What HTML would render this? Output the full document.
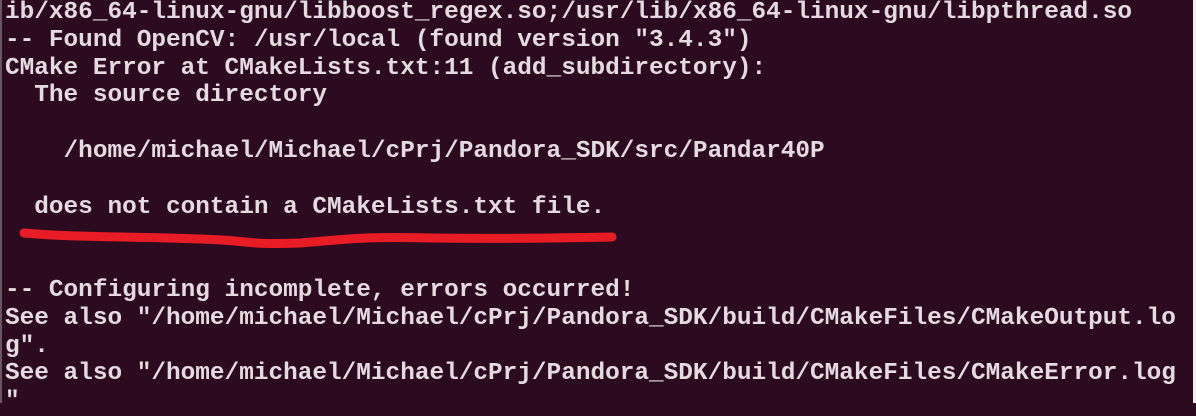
<!DOCTYPE html>
<html><head><meta charset="utf-8"><style>
html,body{margin:0;padding:0;}
body{width:1196px;height:403px;overflow:hidden;background:#2c0a20;position:relative;}
pre{position:absolute;left:5px;top:-1px;margin:0;font-family:"Liberation Mono",monospace;font-size:24.4px;line-height:27.8px;color:#e4dadf;letter-spacing:0;white-space:pre;font-weight:bold;}
.r{position:absolute;right:0;top:0;width:3px;height:403px;background:#f0eef0;}
.l{position:absolute;left:0;top:0;width:2px;height:403px;background:#6a5562;}
svg{position:absolute;left:0;top:0;}
</style></head><body>
<div class="l"></div>
<pre>ib/x86_64-linux-gnu/libboost_regex.so;/usr/lib/x86_64-linux-gnu/libpthread.so
-- Found OpenCV: /usr/local (found version "3.4.3")
CMake Error at CMakeLists.txt:11 (add_subdirectory):
  The source directory

    /home/michael/Michael/cPrj/Pandora_SDK/src/Pandar40P

  does not contain a CMakeLists.txt file.


-- Configuring incomplete, errors occurred!
See also "/home/michael/Michael/cPrj/Pandora_SDK/build/CMakeFiles/CMakeOutput.lo
g".
See also "/home/michael/Michael/cPrj/Pandora_SDK/build/CMakeFiles/CMakeError.log
"</pre>
<svg width="1196" height="403"><path d="M24 233 C80 238 130 236 200 239 C260 241 240 245 300 243 C340 240 360 236 430 238 C500 239 550 238 612 237" stroke="#e81c24" stroke-width="9" fill="none" stroke-linecap="round"/></svg>
<div class="r"></div>
</body></html>
